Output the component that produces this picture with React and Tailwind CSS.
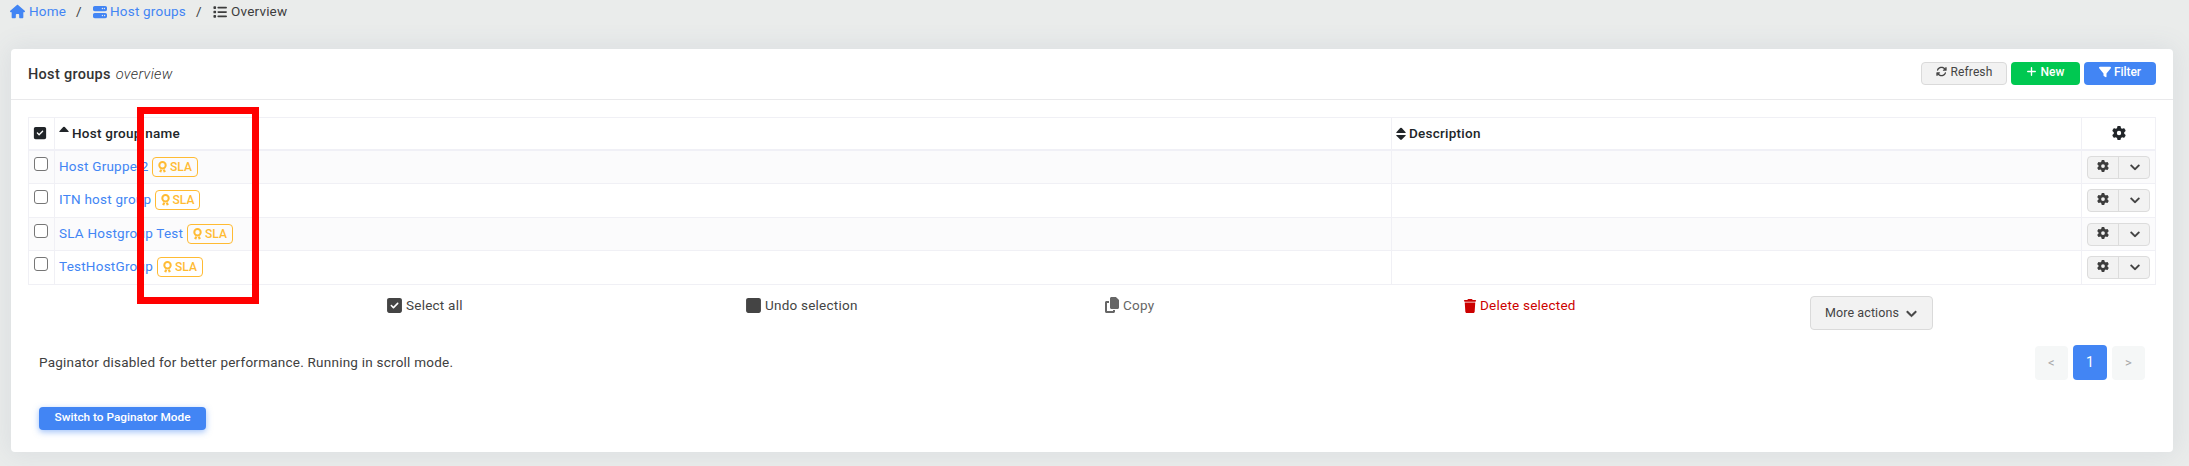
import React from 'react';
import {
  FaHouse, FaServer, FaList, FaArrowsRotate, FaPlus, FaFilter, FaGear,
  FaSquareCheck, FaSquare, FaCopy, FaTrash, FaAngleDown,
} from 'react-icons/fa6';

const rows = [
  { name: 'Host Gruppe 2', height: 'h-[33px]', bg: 'bg-[#fbfbfc]', width: 'w-[89px]', badge: 'w-[46px]' },
  { name: 'ITN host group', height: 'h-[34px]', bg: 'bg-white', width: 'w-[92px]', badge: 'w-[45px]' },
  { name: 'SLA Hostgroup Test', height: 'h-[33px]', bg: 'bg-[#fbfbfc]', width: 'w-[124px]', badge: 'w-[46px]' },
  { name: 'TestHostGroup', height: 'h-[34px]', bg: 'bg-white', width: 'w-[94px]', badge: 'w-[46px]' },
];

function AwardIcon() {
  return (
    <svg viewBox="0 0 9 12" className="h-3 w-[9px] shrink-0" fill="none" stroke="currentColor">
      <circle cx="4.5" cy="4.3" r="3.2" strokeWidth="2" />
      <path d="M2.2 8.2 1.1 10.8l1.3.1.6 1.1 1.2-3ZM6.8 8.2l1.1 2.6-1.3.1-.6 1.1L4.8 9Z" stroke="none" fill="currentColor" />
    </svg>
  );
}

function SortIcon({ both }) {
  return (
    <svg viewBox="0 0 10 14" className="h-[14px] w-[10px] shrink-0" fill="currentColor">
      <path d="M.7 6Q0 6 .4 5.2L4.2 1.1Q5 .4 5.8 1.1L9.6 5.2Q10 6 9.3 6Z" />
      {both && <path d="M.7 8Q0 8 .4 8.8L4.2 12.6Q5 13.3 5.8 12.6L9.6 8.8Q10 8 9.3 8Z" />}
    </svg>
  );
}

function RowButtons() {
  return (
    <div className="flex h-[23px] w-[63px] rounded-[4px] border border-[#dcdcdc] bg-[#f2f2f2] text-[#3c3c3c]">
      <div className="flex w-[31px] justify-center border-r border-[#dcdcdc] pt-[3px]">
        <FaGear className="size-[12px]" />
      </div>
      <div className="flex flex-1 justify-center pl-px pt-[4px]">
        <FaAngleDown className="size-[12px]" strokeWidth="20" />
      </div>
    </div>
  );
}

export default function App() {
  return (
    <div className="relative flex h-[466px] w-[2189px] flex-col overflow-hidden bg-[#eaeceb] font-['Roboto',sans-serif] text-[13.5px] leading-5 tracking-[0.23px] text-[#404040]">
      <nav className="flex h-[49px] shrink-0 items-start pl-[10px] pt-[1px] tracking-[0.2px] text-[#3d3d3d]">
        <a className="flex w-[66px] items-center gap-[4px] text-[#4285f4]">
          <FaHouse className="mt-px size-[15px]" />Home
        </a>
        <span className="w-[17px]">/</span>
        <a className="flex w-[103px] items-center gap-[3px] whitespace-nowrap text-[#4285f4]">
          <FaServer className="mt-px size-[14px]" />Host groups
        </a>
        <span className="w-[17px]">/</span>
        <span className="flex items-center gap-[4px]"><FaList className="mt-px size-[14px]" />Overview</span>
      </nav>

      <main className="ml-[11px] flex h-[403px] w-[2162px] shrink-0 flex-col rounded-[4px] bg-white shadow-[0_0_26px_2px_rgba(82,94,140,0.10)]">
        <header className="flex h-[51px] shrink-0 items-start justify-between border-b border-[#e9e9eb] pl-[17px] pr-[17px]">
          <h1 className="mt-[16px] flex gap-[5px] text-[14.5px] font-medium tracking-[0.3px] text-[#333]">
            Host groups <em className="font-light">overview</em>
          </h1>
          <div className="mt-[13px] flex gap-[4px] text-[12px] leading-4 tracking-[0.1px]">
            <button className="flex h-[23px] w-[86px] justify-center gap-[4px] rounded-[4px] border border-[#dadada] bg-[#f2f2f2] pt-px text-[#444]">
              <FaArrowsRotate className="mt-[2px] size-[11px]" />Refresh
            </button>
            <button className="flex h-[23px] w-[69px] justify-center gap-[3px] rounded-[4px] bg-[#00c851] pt-[2px] font-medium text-white">
              <FaPlus className="mt-[2px] size-[11px]" />New
            </button>
            <button className="flex h-[23px] w-[72px] justify-center gap-[3px] rounded-[4px] bg-[#4285f4] pt-[2px] font-medium tracking-[-0.1px] text-white">
              <FaFilter className="mt-[2px] size-[12px]" />Filter
            </button>
          </div>
        </header>

        <section className="ml-[17px] mt-[17px] w-[2128px] shrink-0 border-l border-t border-[#f0f0f5]">
          <div className="flex h-[33px] border-b-2 border-[#f0f0f6] font-medium tracking-[0.25px] text-[#212529]">
            <div className="w-[26px] border-r border-[#f0f0f5] pl-[4px] pt-[8px]"><FaSquareCheck className="size-[14px]" /></div>
            <div className="flex w-[1337px] gap-[3px] border-r border-[#f0f0f5] pl-[4px] pt-[5px]"><span className="pt-[3px]"><SortIcon /></span>Host group name</div>
            <div className="flex w-[690px] gap-[3px] border-r border-[#f0f0f5] pl-[4px] pt-[5px]"><span className="pt-[4px]"><SortIcon both /></span>Description</div>
            <div className="flex flex-1 justify-center border-r border-[#f0f0f5] pt-[8px]"><FaGear className="size-[14px]" /></div>
          </div>
          {rows.map((row) => (
            <div key={row.name} className={`flex border-b border-[#f0f0f5] ${row.height} ${row.bg}`}>
              <div className="w-[26px] border-r border-[#f0f0f5] pl-[5px] pt-[6px]">
                <div className="size-[14px] rounded-[3px] border border-[#767676] bg-white" />
              </div>
              <div className="flex w-[1337px] gap-[4px] border-r border-[#f0f0f5] pl-[4px] pt-[5px]">
                <a className={`whitespace-nowrap text-[#4285f4] ${row.width}`}>{row.name}</a>
                <span className={`mt-px flex h-[20px] items-center justify-center gap-[3px] rounded-[4px] border border-[#ffbb33] text-[12px] font-medium tracking-[0px] text-[#ffbb33] ${row.badge}`}>
                  <AwardIcon />SLA
                </span>
              </div>
              <div className="w-[690px] border-r border-[#f0f0f5]" />
              <div className="flex-1 border-r border-[#f0f0f5] pl-[5px] pt-[5px]"><RowButtons /></div>
            </div>
          ))}
        </section>

        <div className="flex h-[60px] shrink-0 pl-[375px] pt-[10px] text-[#444]">
          <div className="flex h-5 w-[359px] items-center gap-[3px]"><FaSquareCheck className="mt-px size-[17px]" />Select all</div>
          <div className="flex h-5 w-[359px] items-center gap-[3px]"><FaSquare className="mt-px size-[17px]" />Undo selection</div>
          <div className="flex h-5 w-[359px] items-center gap-[3px] text-[#666]"><FaCopy className="size-[16px]" />Copy</div>
          <div className="flex h-5 w-[347px] items-center gap-[3px] text-[#c00]"><FaTrash className="mt-px size-[14px]" />Delete selected</div>
          <button className="mt-px flex h-[34px] w-[123px] items-center justify-center gap-[6px] rounded-[4px] border border-[#dadada] bg-[#f2f2f2] text-[12.5px] tracking-[0.1px]">
            More actions<FaAngleDown className="size-[13px]" strokeWidth="20" />
          </button>
        </div>

        <div className="flex shrink-0 items-start justify-between pl-[28px] pr-[28px]">
          <p className="mt-[7px]">Paginator disabled for better performance. Running in scroll mode.</p>
          <div className="flex gap-[5px] text-[13px] text-[#a8a8a8]">
            <span className="mt-px flex h-[34px] w-[33px] items-center justify-center rounded-[4px] bg-[#f5f7f7]">&lt;</span>
            <span className="flex h-[35px] w-[34px] items-center justify-center rounded-[4px] bg-[#4285f4] pb-[2px] text-[14px] text-white">1</span>
            <span className="mt-px flex h-[34px] w-[33px] items-center justify-center rounded-[4px] bg-[#f5f7f7]">&gt;</span>
          </div>
        </div>
        <button className="ml-[28px] mt-[27px] h-[23px] w-[167px] shrink-0 rounded-[4px] bg-[#4285f4] pb-[3px] text-[11.8px] font-medium leading-5 tracking-[0px] text-white shadow-[0_2px_6px_rgba(66,133,244,0.5)]">
          Switch to Paginator Mode
        </button>
      </main>
      <div className="absolute left-[137px] top-[107px] h-[197px] w-[122px] border-[7px] border-[#ff0000]" />
    </div>
  );
}
